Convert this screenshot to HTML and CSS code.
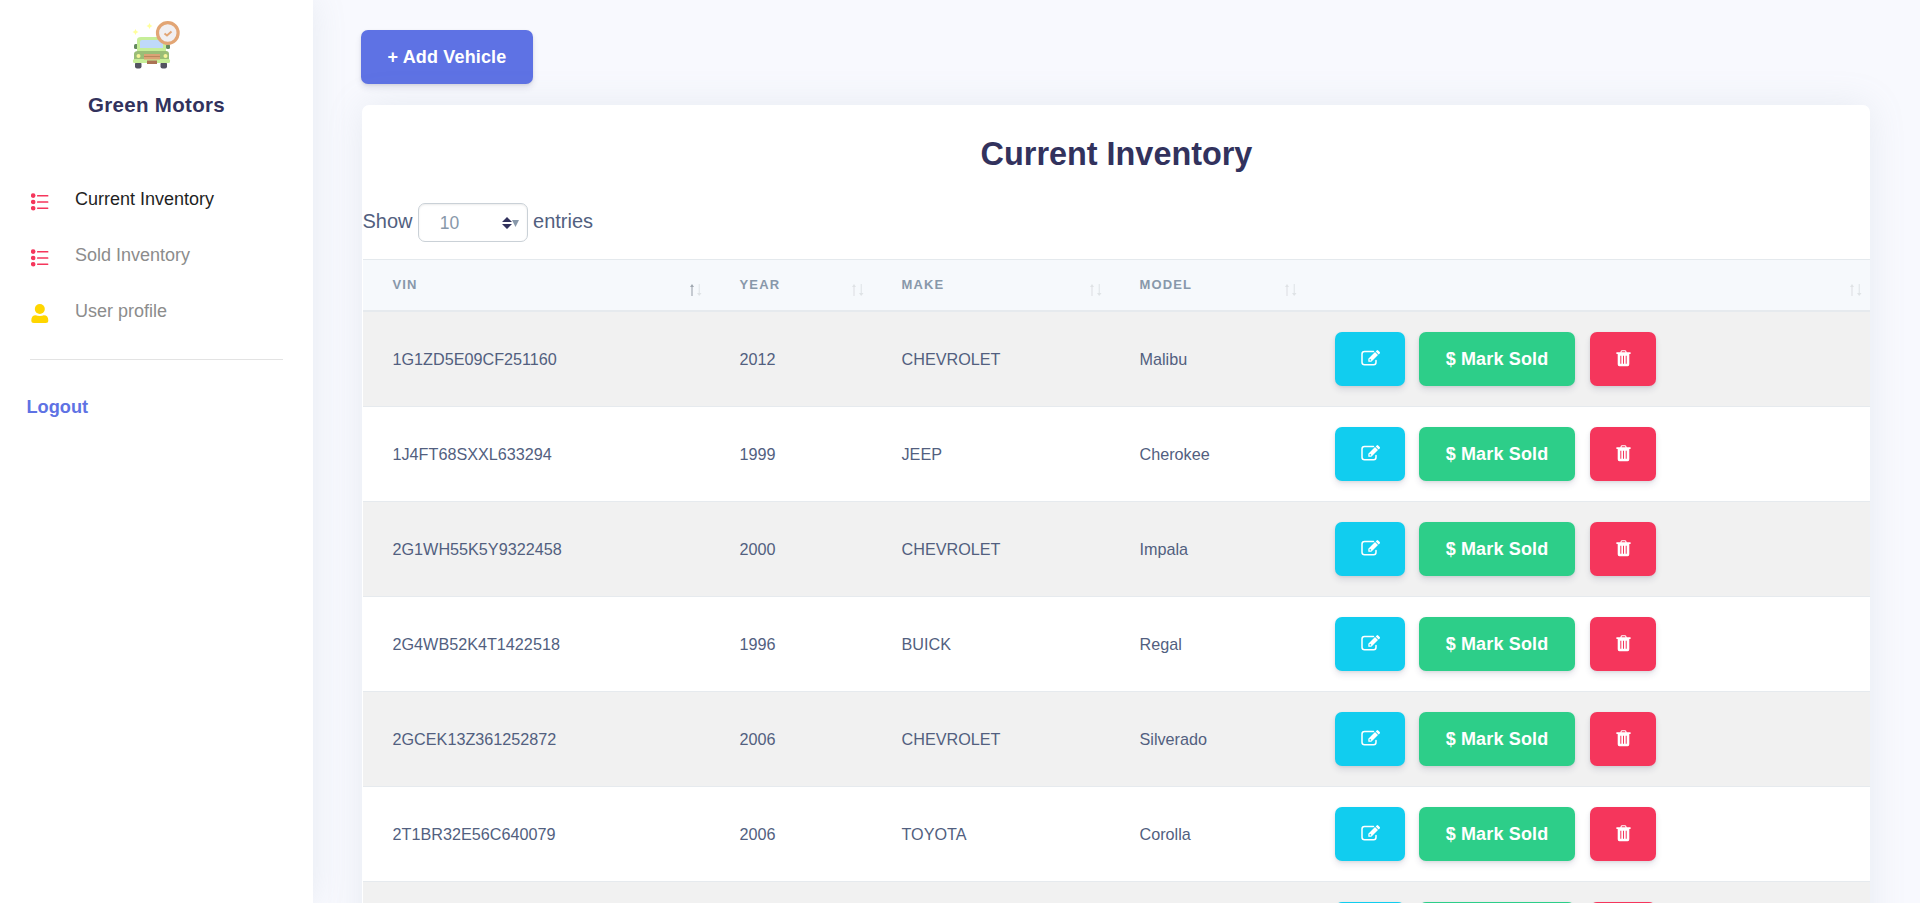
FILE: index.html
```html
<!DOCTYPE html>
<html lang="en">
<head>
<meta charset="utf-8">
<title>Green Motors</title>
<link rel="stylesheet" href="styles.css">
</head>
<body>
<svg class="defs" aria-hidden="true">
  <symbol id="list" viewBox="0 0 18 18"><g fill="currentColor"><circle cx="2.200" cy="2.600" r="2.300"/><circle cx="2.200" cy="9" r="2.300"/><circle cx="2.200" cy="15.200" r="2.300"/><rect x="6" y="2" width="11.400" height="1.500" rx=".6"/><rect x="6" y="8.300" width="11.400" height="1.500" rx=".6"/><rect x="6" y="14.400" width="11.400" height="1.500" rx=".6"/></g></symbol>
  <symbol id="edit" viewBox="0 0 19 16"><path fill="none" stroke="currentColor" stroke-width="1.500" stroke-linecap="round" d="M12.500 1.500H3.500Q1 1.500 1 4v8.200q0 2.500 2.500 2.500h9.200q2.300 0 2.300-2.500V10.500"/><path fill="currentColor" fill-rule="evenodd" d="M7.300 8.800 14 2.100l3 3-6.700 6.700H7.300zM8.600 9.300v1.300h1.300l.5-.5-1.300-1.300zM14.700 1.400l1-1q.8-.6 1.500 0l1.500 1.500q.6.7 0 1.500l-1 1z"/></symbol>
  <symbol id="trash" viewBox="0 0 15 17"><path fill="currentColor" fill-rule="evenodd" d="M4.300 2.200 4.900.8Q5.200.2 5.900.2h3.200q.7 0 1 .6l.6 1.400H14.200q.5 0 .5.500v.8q0 .4-.5.400h-.9v10.400q0 2-1.700 2H3.400q-1.700 0-1.700-2V3.900H.8q-.5 0-.5-.4v-.8q0-.5.500-.5zM5.500 2.200h4L9.100 1.300H5.900zM4.300 5.800v7.900h1V5.800zm2.700 0v7.900h1V5.800zm2.700 0v7.900h1V5.800z"/></symbol>
</svg>
<div class="app">
  <aside class="sidebar">
    <svg class="logo" viewBox="0 0 48 48">
      <path fill="#ffff9a" d="M3.500 8l1 2 2 1-2 1-1 2-1-2-2-1 2-1zM17.500 2l1 2 2 1-2 1-1 2-1-2-2-1 2-1z"/>
      <rect x="3" y="41" width="6.500" height="6.500" rx="2" fill="#535360"/><rect x="28.500" y="41" width="6.500" height="6.500" rx="2" fill="#535360"/>
      <rect x="2" y="23" width="4" height="5" rx="1.500" fill="#64895f"/><rect x="34" y="23" width="4" height="5" rx="1.500" fill="#64895f"/>
      <path fill="#c6ee98" d="M5 31V19q0-3 4-3h21q4 0 4 3v12z"/>
      <path fill="#bfd9fa" d="M8 27v-6q0-2 2-2h19q2 0 2 2v6z"/>
      <path fill="#9abd76" d="M2 39V33q0-3 4-3h28q3 0 3 3v6z"/>
      <rect x="1" y="38" width="37" height="4" rx="1.500" fill="#c6ee98"/>
      <rect x="12" y="33" width="16" height="5.500" fill="#dba275"/><path d="M12 35.500h16" stroke="#b9875c"/>
      <rect x="15" y="39.500" width="10" height="3.500" fill="#aa7353"/>
      <circle cx="6.500" cy="35" r="2" fill="#f7f49a"/><circle cx="33.500" cy="35" r="2" fill="#f7f49a"/>
      <circle cx="35.800" cy="12" r="10.300" fill="#f1eff1" stroke="#e2a574" stroke-width="3.200"/>
      <path d="M32.500 12.500l2.500 2 4.500-4" fill="none" stroke="#e2a574" stroke-width="2"/>
    </svg>
    <h1 class="brand">Green Motors</h1>
    <nav class="nav">
      <a class="nav-item active"><svg class="nav-icon red"><use href="#list"/></svg>Current Inventory</a>
      <a class="nav-item"><svg class="nav-icon red"><use href="#list"/></svg>Sold Inventory</a>
      <a class="nav-item"><svg class="nav-icon yellow" viewBox="0 0 18 20"><circle cx="8.800" cy="5" r="5"/><path d="M.3 16.500Q.3 11.300 4.800 11.200 6 12 8.800 12t4-.8q4.500.1 4.500 5.300 0 2.500-2.500 2.500H2.800Q.3 19 .3 16.500z"/></svg>User profile</a>
    </nav>
    <hr class="divider">
    <a class="logout">Logout</a>
  </aside>
  <main class="main">
    <button class="btn add">+ Add Vehicle</button>
    <section class="card">
      <h2 class="title">Current Inventory</h2>
      <div class="length">Show <span class="select">10<svg class="carets" viewBox="0 0 17 12"><path fill="#32325d" d="M0 5 5 0l5 5zM0 7h10l-5 5z"/><path fill="#8898aa" d="M10 3h7l-3.500 7z"/></svg></span> entries</div>
      <table class="table">
        <colgroup><col class="c-vin"><col class="c-year"><col class="c-make"><col class="c-model"><col></colgroup>
        <thead><tr id="heads"></tr></thead>
        <tbody id="rows"></tbody>
      </table>
    </section>
  </main>
</div>
<script src="app.js"></script>
</body>
</html>
```

FILE: styles.css
```css
* { box-sizing: border-box; }
html, body { height: 100%; }
body { margin: 0; overflow: hidden; background: #f8f9fe; font-family: "Liberation Sans", Arial, sans-serif; color: #525f7f; }
.defs { display: none; }
.app { display: flex; height: 903px; overflow: hidden; }
.sidebar { width: 313px; flex: none; background: #fff; box-shadow: 0 0 32px rgba(136, 152, 170, .15); display: flex; flex-direction: column; }
.logo { width: 48px; height: 48px; margin: 21px 0 0 132px; flex: none; }
.brand { margin: 22px 0 0; text-align: center; font-size: 20.500px; line-height: 28px; letter-spacing: .3px; color: #32325d; }
.nav { display: flex; flex-direction: column; margin-top: 52px; }
.nav-item { display: flex; height: 56px; padding: 14px 0 0 31px; font-size: 18px; line-height: 28px; color: #8c8c8c; }
.nav-item.active { color: #1f1f1f; }
.nav-icon { width: 18px; height: 20px; margin: 7px 26px 0 0; fill: currentColor; }
.nav-icon.red { color: #f5365c; height: 18px; margin-top: 8px; }
.nav-icon.yellow { color: #ffd600; }
.divider { width: 253px; margin: 20px 0 0 30px; border: 0; border-top: 1px solid #e3e3e3; }
.logout { margin: 33px 0 0 26.500px; font-size: 18.200px; line-height: 28px; font-weight: bold; color: #5e72e4; }
.main { flex: 1; padding: 30px 50px 0 48px; }
.btn { height: 54px; padding: 0; border: 0; border-radius: 7px; display: flex; align-items: center; justify-content: center; font: bold 18px "Liberation Sans", Arial, sans-serif; letter-spacing: .15px; color: #fff; box-shadow: 0 4px 6px rgba(50, 50, 93, .11), 0 1px 3px rgba(0, 0, 0, .08); }
.add { width: 172px; background: #5e72e4; }
.card { margin: 21px 0 0 1px; min-height: 850px; border-radius: 7px; background: #fff; box-shadow: 0 0 36px rgba(136, 152, 170, .15); padding-left: 1px; }
.title { margin: 0; padding-top: 28px; text-align: center; font-size: 32.400px; line-height: 42px; color: #32325d; }
.length { display: flex; align-items: center; height: 40px; margin: 28px 0 0 -.5px; gap: 5.250px; font-size: 20px; padding-bottom: 3px; }
.select { width: 110px; height: 39px; flex: none; margin-top: 2px; border: 1px solid #cad1d7; border-radius: 7px; box-shadow: inset 0 1px 2px rgba(0, 0, 0, .08); display: flex; align-items: center; justify-content: space-between; padding: 1px 8px 0 21px; font-size: 17.500px; color: #8898aa; }
.carets { width: 17px; height: 12px; }
.table { width: 100%; margin-top: 16px; table-layout: fixed; border-collapse: separate; border-spacing: 0; }
.c-vin { width: 347px; } .c-year { width: 162px; } .c-make { width: 238px; } .c-model { width: 195px; }
th { height: 53px; padding: 0; border-top: 1px solid #e4e9ed; border-bottom: 2px solid #e6eaee; background: #f6f9fc; text-align: left; font-size: 13px; letter-spacing: 1.150px; color: #8898aa; }
.head { display: flex; justify-content: space-between; align-items: center; height: 50px; padding: 0 8px 2px 29.500px; }
.sort { width: 12px; height: 12px; margin: 12px 0 0 auto; fill: #dfe3e6; }
.asc .up { fill: #a0a8b0; }
td { height: 95px; padding: 0 0 0 29.500px; border-top: 1px solid #e6eaee; font-size: 16.200px; }
td:last-child { padding-left: 30px; }
tr:nth-child(odd) td { background: #f1f1f1; }
tbody tr:first-child td { border-top: 0; height: 94px; }
.actions { display: flex; }
.edit { width: 70px; margin-right: 14px; background: #11cdef; }
.sold { width: 156px; margin-right: 15px; background: #2dce89; }
.delete { width: 66px; background: #f5365c; }
.edit svg { width: 19px; height: 16px; margin-bottom: 2px; }
.delete svg { width: 15px; height: 17px; margin-bottom: 1px; }
```

FILE: app.js
```js
const columns = ["VIN", "YEAR", "MAKE", "MODEL", ""];
document.getElementById("heads").innerHTML = columns.map((c, i) => `<th><div class="head">${c}
<svg class="sort${i ? "" : " asc"}" viewBox="0 0 12 12"><g class="up"><path d="M0 3 2 0 4 3z"/><rect x="1.200" y="2" width="1.600" height="10" opacity=".7"/></g>
<path d="M7 9h4.500L9.200 12z"/><rect x="8.700" y="0" width="1" height="10"/></svg></div></th>`).join("");

const vehicles = [
  ["1G1ZD5E09CF251160", "2012", "CHEVROLET", "Malibu"],
  ["1J4FT68SXXL633294", "1999", "JEEP", "Cherokee"],
  ["2G1WH55K5Y9322458", "2000", "CHEVROLET", "Impala"],
  ["2G4WB52K4T1422518", "1996", "BUICK", "Regal"],
  ["2GCEK13Z361252872", "2006", "CHEVROLET", "Silverado"],
  ["2T1BR32E56C640079", "2006", "TOYOTA", "Corolla"],
  ["", "", "", ""]
];
document.getElementById("rows").innerHTML = vehicles.map(v => `<tr>${v.map(t => `<td>${t}</td>`).join("")}<td><div class="actions">
<button class="btn edit"><svg><use href="#edit"/></svg></button>
<button class="btn sold">${v[0] ? "$ Mark Sold" : ""}</button>
<button class="btn delete"><svg><use href="#trash"/></svg></button></div></td></tr>`).join("");
```
